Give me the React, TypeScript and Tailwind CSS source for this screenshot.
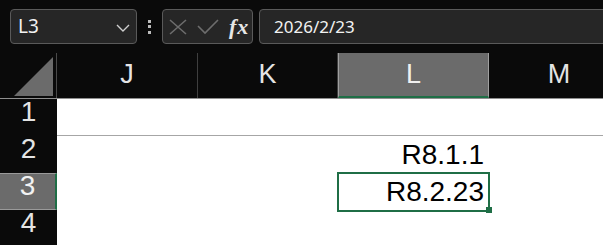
const GREEN = "border-[#1f6e46]";

function TopBar() {
  return (
    <div className="flex h-[53px] py-[9px] pl-[10px] font-['Noto_Sans','Liberation_Sans',sans-serif]">
      {/* name box */}
      <div className="flex w-[127px] shrink-0 items-center justify-between rounded-[4px] border border-[#5a5a5a] bg-[#262626] pl-[7px] pr-[6px]">
        <span className="text-[19px] leading-none text-[#f2f2f2]">L3</span>
        <svg width="14" height="8" viewBox="0 0 14 8" className="mt-[2px]">
          <polyline points="1,1 7,7 13,1" fill="none" stroke="#cfcfcf" strokeWidth="1.4" />
        </svg>
      </div>
      {/* more */}
      <div className="flex w-[25px] shrink-0 flex-col items-center justify-center gap-[2.5px]">
        <span className="h-[3px] w-[3px] bg-[#bdbdbd]" />
        <span className="h-[3px] w-[3px] bg-[#bdbdbd]" />
        <span className="h-[3px] w-[3px] bg-[#bdbdbd]" />
      </div>
      {/* cancel / enter / fx */}
      <div className="flex w-[91px] shrink-0 items-center rounded-[4px] border border-[#5a5a5a] bg-[#262626] pl-[6px]">
        <svg width="18" height="16" viewBox="0 0 18 16">
          <path d="M1 1 L17 15 M17 1 L1 15" stroke="#6d6d6d" strokeWidth="1.6" fill="none" />
        </svg>
        <svg width="22" height="16" viewBox="0 0 22 16" className="ml-[10px]">
          <polyline points="1,7 8,14 21,1" stroke="#6d6d6d" strokeWidth="1.6" fill="none" />
        </svg>
        <span className="ml-[10px] font-['Liberation_Serif',serif] text-[22px] font-bold italic leading-none tracking-[1px] text-[#e6e6e6]">
          fx
        </span>
      </div>
      {/* formula */}
      <div className="ml-[6px] flex w-[360px] shrink-0 items-center rounded-[4px] border border-[#5a5a5a] bg-[#262626] pl-[14px]">
        <span className="text-[17px] leading-none text-[#f2f2f2]">2026/2/23</span>
      </div>
    </div>
  );
}

function HeaderRow() {
  const cols = [
    { label: "J", w: "w-[141px]", sel: false },
    { label: "K", w: "w-[140px]", sel: false },
    { label: "L", w: "w-[151px]", sel: true },
    { label: "M", w: "w-[141px]", sel: false },
  ];
  return (
    <div className="flex h-[46px] border-b border-[#8f8f8f]">
      <div className="relative w-[57px] shrink-0 border-r border-[#4a4a4a]">
        <svg width="57" height="45" className="absolute left-0 top-0">
          <polygon points="14,43 53,4 53,43" fill="#6b6b6b" />
        </svg>
      </div>
      {cols.map((c) =>
        c.sel ? (
          <div
            key={c.label}
            className={`${c.w} shrink-0 border-x border-b-2 border-x-[#a0a0a0] border-b-[#1f6e46] bg-[#6b6b6b] text-center text-[27px] leading-[43px] text-[#f0f0f0]`}
          >
            {c.label}
          </div>
        ) : (
          <div
            key={c.label}
            className={`${c.w} shrink-0 border-r border-[#3f3f3f] text-center text-[27px] leading-[43px] text-[#e4e4e4]`}
          >
            {c.label}
          </div>
        )
      )}
    </div>
  );
}

function Row({ n, value, selected, lineBelow }: { n: number; value?: string; selected?: boolean; lineBelow?: boolean }) {
  return (
    <div className="flex h-[37px]">
      <div
        className={
          selected
            ? `w-[57px] shrink-0 border-y border-r-2 border-y-[#9a9a9a] ${GREEN} border-r-[#1f6e46] bg-[#6b6b6b] text-center text-[28px] leading-[24px] text-[#f2f2f2]`
            : "w-[57px] shrink-0 pt-[1px] text-center text-[28px] leading-[24px] text-[#e4e4e4]"
        }
      >
        {n}
      </div>
      <div className={`flex flex-1 bg-white ${lineBelow ? "border-b border-[#a6a6a6]" : ""}`}>
        <div className="w-[281px] shrink-0" />
        <div className="relative w-[151px] shrink-0 pr-[5px] text-right text-[28px] leading-[37px] text-black">
          {value}
          {selected && (
            <>
              <div className="absolute -bottom-[2px] -left-[1px] -right-[1px] -top-[1px] border-2 border-[#1f6e46]" />
              <div className="absolute -bottom-[3px] -right-[3px] h-[6px] w-[6px] bg-[#1f6e46]" />
            </>
          )}
        </div>
        <div className="flex-1" />
      </div>
    </div>
  );
}

export default function App() {
  return (
    <div className="h-[245px] w-[603px] overflow-hidden bg-[#0a0a0a] font-['Liberation_Sans',Arial,sans-serif]">
      <TopBar />
      <HeaderRow />
      <Row n={1} lineBelow />
      <Row n={2} value="R8.1.1" />
      <Row n={3} value="R8.2.23" selected />
      <Row n={4} />
    </div>
  );
}
